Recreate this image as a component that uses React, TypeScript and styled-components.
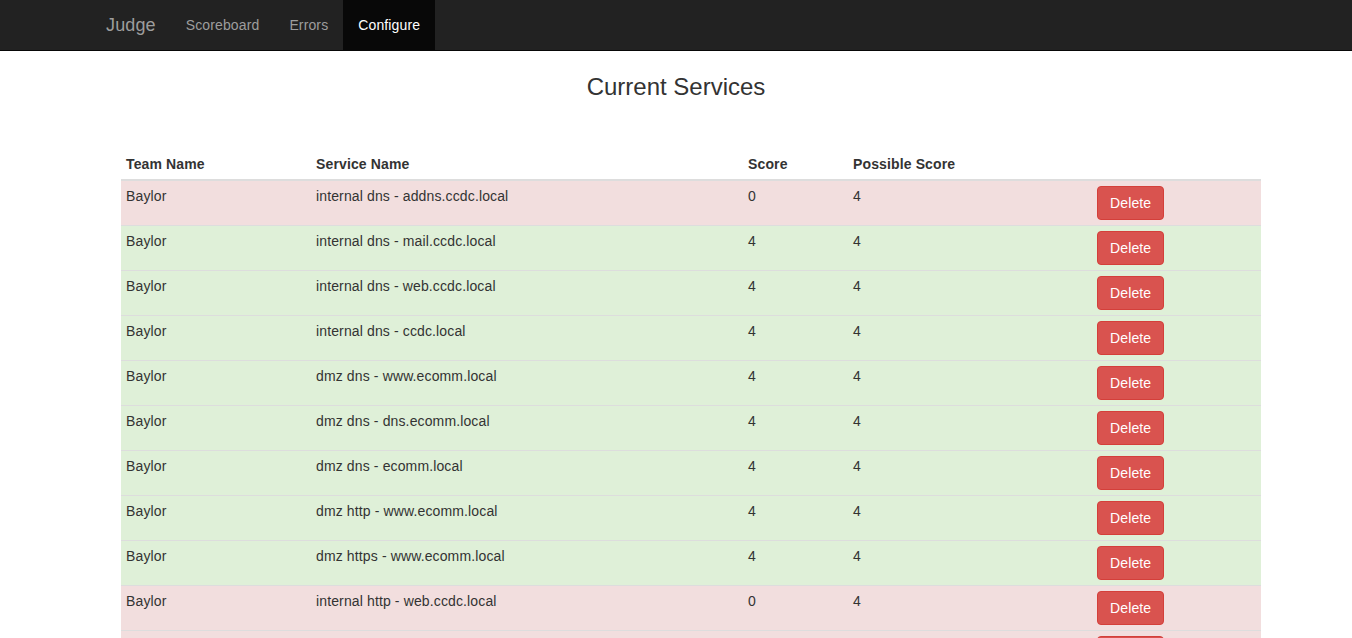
import React from "react";
import styled, { createGlobalStyle } from "styled-components";

const Global = createGlobalStyle`
  html, body { margin: 0; padding: 0; background: #fff; }
  body {
    font-family: "Liberation Sans", Arial, Helvetica, sans-serif;
    font-size: 14px;
    line-height: 1.42857;
    color: #333;
    letter-spacing: 0.13px;
  }
  * { box-sizing: border-box; }
`;

const Navbar = styled.nav`
  background: #222;
  border-bottom: 1px solid #080808;
  height: 51px;
`;

const NavContainer = styled.div`
  width: 1170px;
  margin: 0 auto;
  display: flex;
  align-items: stretch;
  height: 50px;
`;

const Brand = styled.a`
  padding: 15px;
  font-size: 18px;
  line-height: 20px;
  color: #9d9d9d;
  text-decoration: none;
`;

const NavLink = styled.a<{ $active?: boolean }>`
  padding: 15px;
  line-height: 20px;
  font-size: 14px;
  color: ${(p) => (p.$active ? "#fff" : "#9d9d9d")};
  background: ${(p) => (p.$active ? "#080808" : "transparent")};
  text-decoration: none;
`;

const Main = styled.main`
  width: 1170px;
  margin: 0 auto;
`;

const Title = styled.h3`
  margin: 23px 0 49px;
  font-size: 24px;
  font-weight: 500;
  line-height: 1.1;
  text-align: center;
  letter-spacing: 0;
`;

const TableWrap = styled.div`
  padding-left: 30px;
`;

const Table = styled.table`
  width: 1140px;
  border-collapse: collapse;
  border-spacing: 0;
`;

const Th = styled.th<{ $w: number }>`
  width: ${(p) => p.$w}px;
  text-align: left;
  font-weight: bold;
  padding: 5px;
  line-height: 20px;
  vertical-align: bottom;
  border-bottom: 2px solid #ddd;
`;

const Row = styled.tr<{ $ok: boolean }>`
  background: ${(p) => (p.$ok ? "#dff0d8" : "#f2dede")};
`;

const Td = styled.td`
  padding: 5px;
  line-height: 20px;
  vertical-align: top;
  border-top: 1px solid #ddd;
`;

const DeleteButton = styled.button`
  font-family: inherit;
  font-size: 14px;
  line-height: 20px;
  letter-spacing: 0.13px;
  padding: 6px 12px;
  color: #fff;
  background: #d9534f;
  border: 1px solid #d43f3a;
  border-radius: 4px;
  cursor: pointer;
`;

const rows: [string, number][] = [
  ["internal dns - addns.ccdc.local", 0],
  ["internal dns - mail.ccdc.local", 4],
  ["internal dns - web.ccdc.local", 4],
  ["internal dns - ccdc.local", 4],
  ["dmz dns - www.ecomm.local", 4],
  ["dmz dns - dns.ecomm.local", 4],
  ["dmz dns - ecomm.local", 4],
  ["dmz http - www.ecomm.local", 4],
  ["dmz https - www.ecomm.local", 4],
  ["internal http - web.ccdc.local", 0],
  ["internal smtp - mail.ccdc.local", 0],
];

export default function App() {
  return (
    <>
      <Global />
      <Navbar>
        <NavContainer>
          <Brand href="#">Judge</Brand>
          <NavLink href="#">Scoreboard</NavLink>
          <NavLink href="#">Errors</NavLink>
          <NavLink href="#" $active>
            Configure
          </NavLink>
        </NavContainer>
      </Navbar>
      <Main>
        <Title>Current Services</Title>
        <TableWrap>
          <Table>
            <thead>
              <tr>
                <Th $w={190}>Team Name</Th>
                <Th $w={432}>Service Name</Th>
                <Th $w={105}>Score</Th>
                <Th $w={244}>Possible Score</Th>
                <Th $w={169}></Th>
              </tr>
            </thead>
            <tbody>
              {rows.map(([name, score], i) => (
                <Row key={i} $ok={score === 4}>
                  <Td>Baylor</Td>
                  <Td>{name}</Td>
                  <Td>{score}</Td>
                  <Td>4</Td>
                  <Td>
                    <DeleteButton>Delete</DeleteButton>
                  </Td>
                </Row>
              ))}
            </tbody>
          </Table>
        </TableWrap>
      </Main>
    </>
  );
}
